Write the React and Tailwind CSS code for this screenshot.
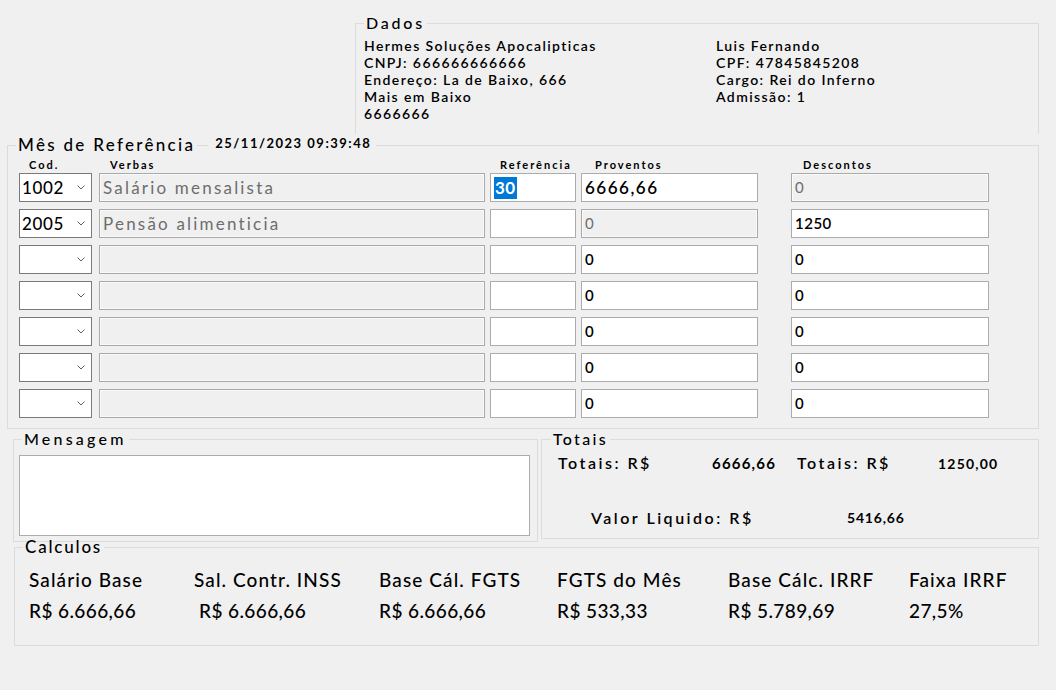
import React from "react";

const rows = [
  { cod: "1002", verba: "Salário mensalista", ref: "30", prov: "6666,66", desc: "0", descOff: true, big: true },
  { cod: "2005", verba: "Pensão alimenticia", ref: "", prov: "0", desc: "1250", provOff: true },
  { cod: "", verba: "", ref: "", prov: "0", desc: "0" },
  { cod: "", verba: "", ref: "", prov: "0", desc: "0" },
  { cod: "", verba: "", ref: "", prov: "0", desc: "0" },
  { cod: "", verba: "", ref: "", prov: "0", desc: "0" },
  { cod: "", verba: "", ref: "", prov: "0", desc: "0" },
];

const calculos = [
  { label: "Salário Base", value: "R$ 6.666,66", w: "w-[165px]" },
  { label: "Sal. Contr. INSS", value: "R$ 6.666,66", w: "w-[185px]", indent: true },
  { label: "Base Cál. FGTS", value: "R$ 6.666,66", w: "w-[178px]" },
  { label: "FGTS do Mês", value: "R$ 533,33", w: "w-[171px]" },
  { label: "Base Cálc. IRRF", value: "R$ 5.789,69", w: "w-[181px]" },
  { label: "Faixa IRRF", value: "27,5%", w: "w-[110px]" },
];

const Chevron = () => (
  <svg width="8" height="5" viewBox="0 0 8 5" className="mr-[6px]">
    <path d="M0.5 0.5 L4 4 L7.5 0.5" fill="none" stroke="#606060" strokeWidth="1" />
  </svg>
);

const Box = ({ off, className, children }) => (
  <div
    className={`h-[29px] flex items-center pl-[3px] border ${
      off
        ? "bg-[#f0f0f0] border-[#a9a9a9] shadow-[inset_0_0_0_1px_#fbfbfb] text-[#6d6d6d]"
        : "bg-white border-[#acacac] text-black"
    } ${className}`}
  >
    {children}
  </div>
);

const App = () => {
  return (
    <div className="w-[1056px] h-[690px] bg-[#f0f0f0] overflow-hidden font-['Lato',sans-serif] text-black flex flex-col">
      {/* Dados */}
      <fieldset className="ml-[355px] mt-[14px] w-[684px] h-[120px] border border-b-0 border-[#dcdcdc]">
        <legend className="ml-[8px] px-[2px] text-[16px] leading-[18px] tracking-[2.8px] font-medium">
          Dados
        </legend>
        <div className="pl-[8px] pt-[5px] grid grid-cols-[352px_1fr] text-[14px] leading-[17px] font-semibold tracking-[1.4px]">
          <div>
            <div>Hermes Soluções Apocalipticas</div>
            <div>CNPJ: 666666666666</div>
            <div>Endereço: La de Baixo, 666</div>
            <div>Mais em Baixo</div>
            <div>6666666</div>
          </div>
          <div>
            <div>Luis Fernando</div>
            <div>CPF: 47845845208</div>
            <div>Cargo: Rei do Inferno</div>
            <div>Admissão: 1</div>
          </div>
        </div>
      </fieldset>

      {/* Mes de Referencia */}
      <fieldset className="ml-[7px] mt-[2px] w-[1032px] h-[293px] border border-[#dcdcdc]">
        <legend className="ml-[8px] flex items-start">
          <span className="px-[2px] text-[17px] leading-[18px] tracking-[2.3px] font-medium">
            Mês de Referência
          </span>
          <span className="w-[11px] h-px mt-[9px] bg-[#dcdcdc]" />
          <span className="pl-[7px] pr-[5px] text-[13px] leading-[14px] font-bold tracking-[1.5px] bg-[#f0f0f0]">
            25/11/2023 09:39:48
          </span>
        </legend>

        <div className="pl-[11px] pt-[4px] flex flex-col">
          <div className="h-[15px] flex text-[11px] leading-[14px] font-bold tracking-[2px]">
            <div className="w-[73px] pl-[10px]">Cod.</div>
            <div className="w-[386px] ml-[7px] pl-[11px]">Verbas</div>
            <div className="w-[86px] ml-[5px] pl-[10px]">Referência</div>
            <div className="w-[177px] ml-[5px] pl-[14px]">Proventos</div>
            <div className="w-[198px] ml-[33px] pl-[12px]">Descontos</div>
          </div>

          <div className="flex flex-col gap-[7px]">
            {rows.map((r, i) => (
              <div key={i} className="flex">
                <div className="w-[73px] h-[29px] bg-white border border-[#7a7a7a] flex items-center justify-between pl-[2px] text-[17px] tracking-[0.6px] font-medium">
                  <span>{r.cod}</span>
                  <Chevron />
                </div>
                <Box off className="w-[386px] ml-[7px] text-[17px] tracking-[2.2px]">
                  {r.verba}
                </Box>
                <Box className="w-[86px] ml-[5px] text-[17px] font-bold">
                  {r.ref && (
                    <span className="bg-[#0078d7] text-white px-[1px] leading-[22px] tracking-[0.5px]">{r.ref}</span>
                  )}
                </Box>
                <Box
                  off={r.provOff}
                  className={`w-[177px] ml-[5px] ${
                    r.big ? "text-[17px] font-semibold tracking-[1.5px]" : r.provOff ? "text-[15px]" : "text-[15px] font-semibold"
                  }`}
                >
                  {r.prov}
                </Box>
                <Box
                  off={r.descOff}
                  className={`w-[198px] ml-[33px] ${r.descOff ? "text-[15px]" : "text-[15px] font-semibold tracking-[0.5px]"}`}
                >
                  {r.desc}
                </Box>
              </div>
            ))}
          </div>
        </div>
      </fieldset>

      {/* Mensagem + Totais */}
      <div className="flex items-start mt-[1px]">
        <fieldset className="ml-[13px] w-[525px] h-[112px] border border-[#dcdcdc]">
          <legend className="ml-[8px] px-[2px] text-[16px] leading-[18px] tracking-[3.2px] font-medium">
            Mensagem
          </legend>
          <div className="ml-[5px] mt-[7px] w-[511px] h-[81px] bg-white border border-[#acacac]" />
        </fieldset>

        <fieldset className="ml-[3px] w-[498px] h-[109px] border border-[#dcdcdc]">
          <legend className="ml-[9px] px-[2px] text-[16px] leading-[18px] tracking-[2.3px] font-medium">
            Totais
          </legend>
          <div className="flex pl-[16px] pt-[5px] h-[25px] items-center">
            <span className="w-[154px] text-[16px] tracking-[2.5px] font-semibold">Totais: R$</span>
            <span className="w-[85px] text-[15px] font-bold tracking-[1.2px]">6666,66</span>
            <span className="w-[141px] text-[16px] tracking-[2.5px] font-semibold">Totais: R$</span>
            <span className="text-[14px] font-bold tracking-[1.2px]">1250,00</span>
          </div>
          <div className="flex pl-[49px] mt-[35px] h-[20px] items-center">
            <span className="w-[256px] text-[16px] tracking-[2.5px] font-semibold">Valor Liquido: R$</span>
            <span className="text-[14px] font-bold tracking-[0.8px] -mt-[2px]">5416,66</span>
          </div>
        </fieldset>
      </div>

      {/* Calculos */}
      <fieldset className="ml-[14px] mt-[-4px] w-[1025px] h-[108px] border border-[#dcdcdc]">
        <legend className="ml-[8px] px-[2px] text-[17px] leading-[18px] tracking-[1.8px] font-medium">
          Calculos
        </legend>
        <div className="pl-[14px] pt-[13px] flex">
          {calculos.map((c) => (
            <div key={c.label} className={`${c.w} flex flex-col`}>
              <span className="text-[19px] leading-[22px] font-medium tracking-[1.1px] whitespace-nowrap">{c.label}</span>
              <span className={`mt-[9px] text-[19px] leading-[22px] font-medium tracking-[0.4px] whitespace-nowrap ${c.indent ? "pl-[5px]" : ""}`}>
                {c.value}
              </span>
            </div>
          ))}
        </div>
      </fieldset>
    </div>
  );
};

export default App;
